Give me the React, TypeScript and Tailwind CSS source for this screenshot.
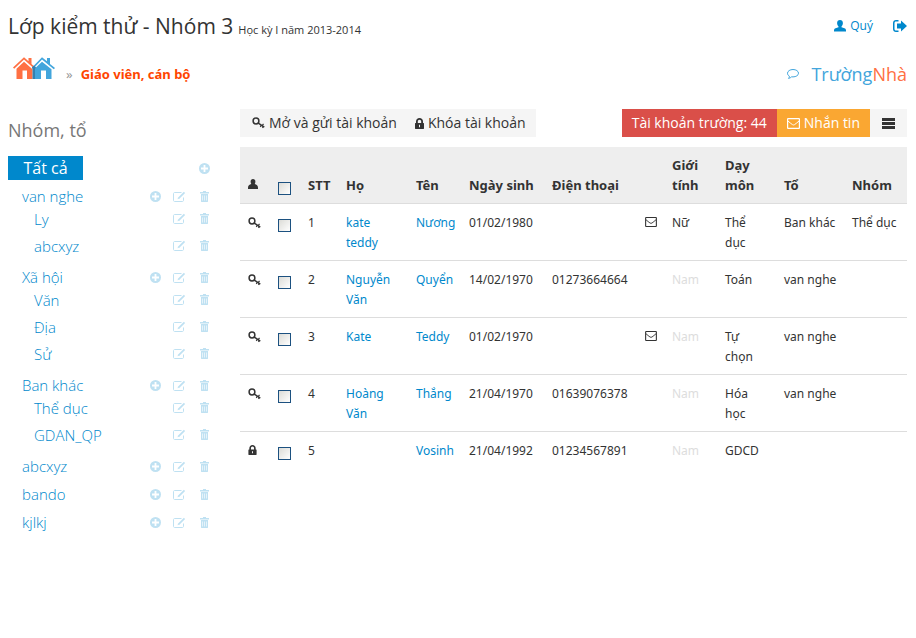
import React from "react";

type IconProps = { className?: string };

function UserIcon({ className = "" }: IconProps) {
  return (
    <svg viewBox="0 0 12 12" className={className} fill="currentColor" aria-hidden="true">
      <path d="M6 0C4.200 0 3.100 1.300 3.100 3.100c0 1.400.6 2.700 1.400 3.300v.8L1.600 8.300C.6 8.700 0 9.400 0 10.400V11.500h12v-1.100c0-1-.6-1.700-1.600-2.100L7.500 7.200v-.8c.8-.6 1.400-1.900 1.400-3.300C8.900 1.300 7.800 0 6 0z" />
    </svg>
  );
}

function SignOutIcon({ className = "" }: IconProps) {
  return (
    <svg viewBox="0 0 14 12" className={className} fill="currentColor" aria-hidden="true">
      <path d="M5.500 0v1.500H3c-.9 0-1.500.6-1.500 1.500v6c0 .9.600 1.500 1.500 1.500h2.500V12H3c-1.700 0-3-1.300-3-3V3c0-1.700 1.300-3 3-3z" />
      <path d="M8 .6 14 6 8 11.400V8.400H4V3.600H8z" />
    </svg>
  );
}

function CommentIcon({ className = "" }: IconProps) {
  return (
    <svg viewBox="0 0 12 10" className={className} fill="none" stroke="currentColor" aria-hidden="true">
      <path d="M6 .5c3 0 5.500 1.600 5.500 3.700S9 7.900 6 7.900c-.5 0-1 0-1.400-.1C3.800 8.600 2.800 9.200 1.500 9.400c.6-.6.9-1.400.9-2.200C1.200 6.500.5 5.500.5 4.200.500 2.100 3 .500 6 .500z" />
    </svg>
  );
}

function KeyIcon({ className = "" }: IconProps) {
  return (
    <svg viewBox="0 0 13 12" className={className} fill="none" stroke="currentColor" aria-hidden="true">
      <circle cx="4" cy="4" r="2.900" strokeWidth="1.500" />
      <path d="M5.900 5.900 12.300 10.200" strokeWidth="1.500" />
      <path d="M9.300 8.200 8.300 9.900M11.300 9.400l-.8 1.500M10.200 8.600l1.300-1.700" strokeWidth="1.200" />
    </svg>
  );
}

function LockIcon({ className = "" }: IconProps) {
  return (
    <svg viewBox="0 0 9 11" className={className} fill="currentColor" aria-hidden="true">
      <path
        fillRule="evenodd"
        d="M1 5V3.500C1 1.500 2.500 0 4.500 0S8 1.500 8 3.500V5h.5c.3 0 .5.200.5.500v5c0 .3-.2.500-.5.500h-8C.2 11 0 10.800 0 10.500v-5C0 5.200.2 5 .5 5zm1.800 0h3.400V3.500c0-1-.7-1.800-1.700-1.800S2.800 2.500 2.800 3.500zM4 6.800v2.400h1V6.800z"
      />
    </svg>
  );
}

function PersonIcon({ className = "" }: IconProps) {
  return (
    <svg viewBox="0 0 10 10" className={className} fill="currentColor" aria-hidden="true">
      <path d="M5 0C3.500 0 2.600 1 2.600 2.500c0 1 .3 1.900.7 2.500-1.900.3-3.300 1.700-3.300 3.700V10h10V8.700c0-2-1.400-3.400-3.300-3.700.4-.6.7-1.500.7-2.500C7.400 1 6.500 0 5 0z" />
    </svg>
  );
}

function MailIcon({ className = "" }: IconProps) {
  return (
    <svg viewBox="0 0 13 11" className={className} fill="none" stroke="currentColor" aria-hidden="true">
      <rect x=".6" y=".6" width="11.800" height="9.800" rx=".5" strokeWidth="1.200" />
      <path d="M1 3c1.500 1.400 3 2.600 4.400 3.600.8.500 1.400.5 2.200 0C9 5.600 10.500 4.400 12 3" />
    </svg>
  );
}

function BarsIcon({ className = "" }: IconProps) {
  return (
    <svg viewBox="0 0 13 11" className={className} fill="currentColor" aria-hidden="true">
      <path d="M0 0h13v3H0zM0 4h13v3H0zM0 8h13v3H0z" />
    </svg>
  );
}

function PlusIcon() {
  return (
    <svg viewBox="0 0 11 11" className="size-[11px]" aria-hidden="true">
      <circle cx="5.500" cy="5.500" r="5.500" fill="currentColor" />
      <path d="M5.500 2v7M2 5.500h7" stroke="white" strokeWidth="1.800" />
    </svg>
  );
}

function EditIcon() {
  return (
    <svg viewBox="0 0 13 11" className="h-[11px] w-[13px]" fill="none" stroke="currentColor" aria-hidden="true">
      <path d="M8.500 1.500H1.600c-.6 0-1.100.5-1.100 1.100v6.800c0 .6.500 1.100 1.100 1.100h7.800c.6 0 1.100-.5 1.100-1.100V6.500" />
      <path d="M5.500 7.300 11.500 1.300" strokeWidth="1.700" />
      <path d="M4.600 8.200l1.600-.4-1.200-1.200z" fill="currentColor" stroke="none" />
    </svg>
  );
}

function TrashIcon() {
  return (
    <svg viewBox="0 0 9 11" className="h-[11px] w-[9px]" fill="currentColor" aria-hidden="true">
      <path d="M3 0h3v1h3v1.500H0V1h3z" />
      <path
        fillRule="evenodd"
        d="M1 3h7v7.500c0 .3-.2.500-.5.500h-6c-.3 0-.5-.2-.5-.5zM2.200 4.500v5h.6v-5zm2 0v5h.6v-5zm2 0v5h.6v-5z"
      />
    </svg>
  );
}

function HousesLogo() {
  return (
    <svg viewBox="0 0 42 22" className="h-[22px] w-[42px]" aria-hidden="true">
      <g fill="#ff7043">
        <path d="M0 10.500 11 .300l4.500 4V1h3v6L23 11l-1.200 1.200L11 2.600 1.200 11.700z" />
        <path d="M3.500 11.700 11 4.700l8.500 7.500V22H14v-8.500H9.500V22h-6z" />
      </g>
      <g fill="#42a5dc">
        <path d="M19 10.500 29 .300l5 4V1h3v6l5 4-1.200 1.200L29 2.600 20.200 11.700z" />
        <path d="M21.500 11.700 29 4.700l9.500 7.500V22h-5.500v-8.500H28V22h-6.500z" />
      </g>
      <path d="M19 10.500 21 8.500l2 2L22 11.700V22h-2.500v-9.800z" fill="#3480b0" />
    </svg>
  );
}

type Group = { name: string; children?: string[] };

const groups: Group[] = [
  { name: "van nghe", children: ["Ly", "abcxyz"] },
  { name: "Xã hội", children: ["Văn", "Địa", "Sử"] },
  { name: "Ban khác", children: ["Thể dục", "GDAN_QP"] },
  { name: "abcxyz" },
  { name: "bando" },
  { name: "kjlkj" },
];

function GroupActions({ name, canAdd = false }: { name: string; canAdd?: boolean }) {
  return (
    <div className="flex text-[#bfe1f2]">
      {canAdd && (
        <button type="button" aria-label={`Thêm vào ${name}`} className="flex h-5 w-[23px] items-center justify-center">
          <PlusIcon />
        </button>
      )}
      <button type="button" aria-label={`Sửa ${name}`} className="flex h-5 w-[25px] items-center justify-center">
        <EditIcon />
      </button>
      <button type="button" aria-label={`Xóa ${name}`} className="flex h-5 w-[25px] items-center justify-center">
        <TrashIcon />
      </button>
    </div>
  );
}

function Sidebar() {
  return (
    <aside className="w-[209px] shrink-0">
      <h2 className="mb-[5px] text-lg leading-[42px] text-[#777]">Nhóm, tổ</h2>
      <div className="mb-[2px] flex h-6 items-center justify-between">
        <a href="#all" className="w-[75px] bg-[#0088cc] text-center text-base leading-6 text-white">
          Tất cả
        </a>
        <button type="button" aria-label="Thêm nhóm" className="flex h-5 w-[25px] items-center justify-center text-[#bfe1f2]">
          <PlusIcon />
        </button>
      </div>
      <ul className="text-[15px] leading-5 font-light text-[#0088cc]">
        {groups.map((g) => (
          <li key={g.name} className="py-1">
            <div className="flex justify-between pl-[14px]">
              <a href="#group">{g.name}</a>
              <GroupActions name={g.name} canAdd />
            </div>
            {g.children && (
              <ul className="-mt-px">
                {g.children.map((c) => (
                  <li key={c} className="flex h-[27px] items-center justify-between pl-[26px]">
                    <a href="#group">{c}</a>
                    <GroupActions name={c} />
                  </li>
                ))}
              </ul>
            )}
          </li>
        ))}
      </ul>
    </aside>
  );
}

type Teacher = {
  locked?: boolean;
  last: string;
  first: string;
  birth: string;
  phone?: string;
  mail?: boolean;
  sex: string;
  subject: string;
  team?: string;
  group?: string;
};

const teachers: Teacher[] = [
  { last: "kate teddy", first: "Nương", birth: "01/02/1980", mail: true, sex: "Nữ", subject: "Thể dục", team: "Ban khác", group: "Thể dục" },
  { last: "Nguyễn Văn", first: "Quyển", birth: "14/02/1970", phone: "01273664664", sex: "Nam", subject: "Toán", team: "van nghe" },
  { last: "Kate", first: "Teddy", birth: "01/02/1970", mail: true, sex: "Nam", subject: "Tự chọn", team: "van nghe" },
  { last: "Hoàng Văn", first: "Thắng", birth: "21/04/1970", phone: "01639076378", sex: "Nam", subject: "Hóa học", team: "van nghe" },
  { locked: true, last: "", first: "Vosinh", birth: "21/04/1992", phone: "01234567891", sex: "Nam", subject: "GDCD" },
];

const boxClass =
  "block size-[13px] appearance-none border border-[#1c5180] bg-linear-to-br from-[#dcdcd7] to-white";

function TeacherTable() {
  return (
    <table className="mt-[10px] w-full table-fixed border-collapse text-left font-['Noto_Sans',sans-serif] text-xs leading-5 [&_td]:h-[57px] [&_td]:pt-[9px] [&_td]:pb-[7px] [&_td]:pl-[7px] [&_td]:align-top [&_th]:py-2 [&_th]:pl-[7px] [&_th]:align-bottom">
      <colgroup>
        <col className="w-[31px]" />
        <col className="w-[30px]" />
        <col className="w-[38px]" />
        <col className="w-[70px]" />
        <col className="w-[53px]" />
        <col className="w-[83px]" />
        <col className="w-[93px]" />
        <col className="w-[27px]" />
        <col className="w-[53px]" />
        <col className="w-[59px]" />
        <col className="w-[68px]" />
        <col />
      </colgroup>
      <thead className="bg-[#eeeeee] text-[13px] leading-5">
        <tr>
          <th scope="col" aria-label="Trạng thái">
            <PersonIcon className="mb-[6px] ml-px size-[10px]" />
          </th>
          <th scope="col">
            <input type="checkbox" aria-label="Chọn tất cả" className={boxClass} />
          </th>
          <th scope="col">STT</th>
          <th scope="col">Họ</th>
          <th scope="col">Tên</th>
          <th scope="col" className="whitespace-nowrap">Ngày sinh</th>
          <th scope="col">Điện thoại</th>
          <th scope="col" aria-label="Email" />
          <th scope="col" className="pr-4">Giới tính</th>
          <th scope="col" className="pr-4">Dạy môn</th>
          <th scope="col">Tổ</th>
          <th scope="col">Nhóm</th>
        </tr>
      </thead>
      <tbody>
        {teachers.map((t, i) => (
          <tr key={t.birth + t.first} className="border-t border-[#dddddd]">
            <td>
              {t.locked ? (
                <LockIcon className="mt-1 ml-px h-[10px] w-[9px]" />
              ) : (
                <KeyIcon className="mt-1 ml-px h-3 w-[13px]" />
              )}
            </td>
            <td>
              <input type="checkbox" aria-label={`Chọn ${t.last} ${t.first}`} className={`mt-[6px] ${boxClass}`} />
            </td>
            <td>{i + 1}</td>
            <td className="pr-5 text-[#0088cc]">{t.last && <a href="#teacher">{t.last}</a>}</td>
            <td className="whitespace-nowrap text-[#0088cc]">
              <a href="#teacher">{t.first}</a>
            </td>
            <td>{t.birth}</td>
            <td>{t.phone}</td>
            <td>{t.mail && <MailIcon className="mt-1 h-[10px] w-3" />}</td>
            <td className={t.sex === "Nam" ? "text-[#dddddd]" : ""}>{t.sex}</td>
            <td className="pr-4">{t.subject}</td>
            <td className="whitespace-nowrap">{t.team}</td>
            <td className="whitespace-nowrap">{t.group}</td>
          </tr>
        ))}
      </tbody>
    </table>
  );
}

function Toolbar() {
  return (
    <div className="flex h-7 justify-between text-sm">
      <div className="flex bg-[#f5f5f5]">
        <button type="button" className="flex items-center gap-1 pr-2 pl-3 whitespace-nowrap">
          <KeyIcon className="h-3 w-[13px]" />
          Mở và gửi tài khoản
        </button>
        <button type="button" className="flex items-center gap-1 px-[10px] whitespace-nowrap">
          <LockIcon className="h-[11px] w-[9px]" />
          Khóa tài khoản
        </button>
      </div>
      <div className="flex">
        <button type="button" className="bg-[#da4f49] px-[10px] whitespace-nowrap text-white">
          Tài khoản trường: 44
        </button>
        <button type="button" className="flex items-center gap-1 bg-[#faa732] px-[10px] whitespace-nowrap text-white">
          <MailIcon className="h-[11px] w-[13px]" />
          Nhắn tin
        </button>
        <button type="button" aria-label="Menu" className="flex w-[37px] items-center justify-center bg-[#f5f5f5]">
          <BarsIcon className="h-[11px] w-[13px]" />
        </button>
      </div>
    </div>
  );
}

export default function App() {
  return (
    <div className="min-h-screen bg-white py-2 pr-[9px] pl-2 font-['Open_Sans','Noto_Sans',sans-serif] text-[#333333]">
      <header>
        <div className="flex h-9 items-center justify-between">
          <div className="flex items-baseline gap-[5px]">
            <h1 className="text-[21px] leading-8">Lớp kiểm thử - Nhóm 3</h1>
            <span className="text-[11px]">Học kỳ I năm 2013-2014</span>
          </div>
          <nav className="flex items-center gap-5 text-xs text-[#0088cc]">
            <a href="#profile" className="flex items-center gap-1">
              <UserIcon className="size-3" />
              Quý
            </a>
            <a href="#logout" aria-label="Đăng xuất">
              <SignOutIcon className="h-3 w-[14px]" />
            </a>
          </nav>
        </div>
        <div className="mt-3 flex h-9 items-center justify-between">
          <div className="flex items-center pl-[5px] font-['Noto_Sans',sans-serif] text-[13px] leading-5">
            <a href="#home" aria-label="Trang chủ" className="mb-3">
              <HousesLogo />
            </a>
            <span className="ml-[11px] text-[#999]">»</span>
            <a href="#staff" className="ml-2 font-bold text-[#ff4500]">
              Giáo viên, cán bộ
            </a>
          </div>
          <div className="flex items-center gap-3 text-lg text-[#42a5dc]">
            <CommentIcon className="h-[10px] w-3" />
            <a href="#home">
              Trường<span className="text-[#ff7043]">Nhà</span>
            </a>
          </div>
        </div>
      </header>
      <div className="mt-[17px] flex gap-[23px]">
        <Sidebar />
        <main className="min-w-0 flex-1">
          <Toolbar />
          <TeacherTable />
        </main>
      </div>
    </div>
  );
}
